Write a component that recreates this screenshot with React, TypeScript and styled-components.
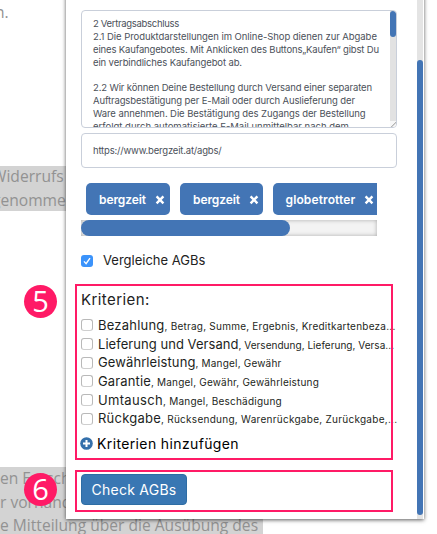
import React from 'react';
import styled, { createGlobalStyle } from 'styled-components';

const BLUE = '#4375b5';
const PINK = '#ff1a66';

const GlobalStyle = createGlobalStyle`
  * { box-sizing: border-box; }
  body { margin: 0; background: #fff; overflow: hidden; font-family: Inter, sans-serif; }
`;

const Page = styled.div`
  position: relative;
  width: 437px;
  height: 534px;
  overflow: hidden;
  background: #fff;
`;

const Article = styled.article`
  display: flex;
  flex-direction: column;
  align-items: flex-start;
  padding-top: 1px;
  font: 15.6px/23.7px 'Open Sans', sans-serif;
  color: #929292;
  white-space: nowrap;
`;

const Paragraph = styled.p<{ $gap?: number; $shift?: number; $selected?: boolean }>`
  margin: ${p => p.$gap ?? 0}px 0 0 ${p => p.$shift ?? 0}px;
  padding-right: 5px;
  background: ${p => (p.$selected ? '#d3d3d3' : 'transparent')};
`;

const Selection = styled(Paragraph)`
  width: 90px;
  height: 45px;
  & > span {
    display: block;
    margin-top: -1px;
    margin-bottom: 1px;
  }
`;

const Panel = styled.section`
  position: absolute;
  left: 66px;
  top: -10px;
  width: 358px;
  height: 529px;
  display: flex;
  background: #fff;
  box-shadow: 0 1px 4px rgba(0, 0, 0, 0.65);
`;

const PanelBody = styled.div`
  width: 351px;
  padding: 20px 0 0 15px;
  display: flex;
  flex-direction: column;
  align-items: flex-start;
`;

const PanelTrack = styled.div`
  flex: 0 0 6px;
  height: 529px;
  padding-top: 70px;
  background: #e4e4e4;
`;

const PanelThumb = styled.div`
  height: 455px;
  border-radius: 3px;
  background: ${BLUE};
`;

const TermsBox = styled.div`
  display: flex;
  justify-content: space-between;
  width: 316px;
  height: 118px;
  border: 1px solid #c9cfda;
  border-radius: 4px;
  overflow: hidden;
`;

const TermsText = styled.div`
  padding: 7px 0 0 11px;
  font-size: 9.5px;
  line-height: 12.86px;
  color: #4b515a;
  white-space: nowrap;
`;

const Line = styled.div<{ $ls: number }>`
  min-height: 12.86px;
  letter-spacing: ${p => p.$ls}px;
`;

const TermsTrack = styled.div`
  width: 6px;
  height: 116px;
  display: flex;
  flex-direction: column;
  justify-content: space-between;
  background: #e2e2e2;
`;

const TermsThumb = styled.div`
  height: 26px;
  border-radius: 3px;
  background: ${BLUE};
`;

const Resizer = styled.div`
  height: 6px;
  background: linear-gradient(135deg, #f7f7f7 55%, #aaa 56%, #f7f7f7 75%);
`;

const UrlField = styled.div`
  width: 316px;
  height: 35px;
  margin-top: 5px;
  padding-left: 11px;
  border: 1px solid #c9cfda;
  border-radius: 4px;
  font-size: 9.5px;
  line-height: 34px;
  letter-spacing: -0.19px;
  color: #4b515a;
`;

const TagStrip = styled.div`
  display: flex;
  gap: 10px;
  width: 296px;
  margin-top: 15px;
  padding-left: 5px;
  overflow: hidden;
`;

const Tag = styled.div<{ $width: number; $ls: number }>`
  flex: 0 0 ${p => p.$width}px;
  height: 32px;
  display: flex;
  align-items: center;
  gap: 9px;
  padding-left: 13px;
  border-radius: 5px;
  background: ${BLUE};
  color: #fff;
  font-size: 12px;
  font-weight: 600;
  letter-spacing: ${p => p.$ls}px;
  svg { display: block; flex: none; margin-top: 2px; }
`;

const StripTrack = styled.div`
  width: 296px;
  height: 16px;
  margin-top: 5px;
  background: #f3f3f3;
  box-shadow: inset 0 0 4px rgba(0, 0, 0, 0.3);
`;

const StripThumb = styled.div`
  width: 209px;
  height: 16px;
  border-radius: 8px;
  background: ${BLUE};
`;

const CompareRow = styled.div`
  display: flex;
  align-items: center;
  gap: 10px;
  height: 20px;
  margin-top: 14px;
  font-size: 13px;
  color: #222;
`;

const Checked = styled.div`
  width: 12px;
  height: 12px;
  margin-top: 1px;
  border-radius: 3px;
  background: #3b93fb;
  svg { display: block; }
`;

const Heading = styled.div`
  height: 22px;
  margin-top: 19px;
  font-size: 15px;
  line-height: 22px;
  letter-spacing: 0.42px;
  color: #222;
`;

const CriteriaList = styled.div`
  display: flex;
  flex-direction: column;
  margin-top: 5px;
`;

const Criterion = styled.div`
  display: flex;
  align-items: center;
  height: 18.7px;
  white-space: nowrap;
  color: #1d1f22;
`;

const Box = styled.div`
  width: 12px;
  height: 12px;
  margin-right: 5px;
  border: 1px solid #b9b9b9;
  border-bottom-color: #cfcfcf;
  border-radius: 3px;
  background: #fff;
`;

const Label = styled.div`
  display: flex;
  align-items: baseline;
  line-height: 18px;
`;

const Name = styled.span<{ $ls: number }>`
  font-size: 13px;
  letter-spacing: ${p => p.$ls}px;
`;

const Terms = styled.span<{ $ls: number }>`
  font-size: 10px;
  letter-spacing: ${p => p.$ls}px;
`;

const AddRow = styled.div`
  display: flex;
  align-items: center;
  gap: 4px;
  height: 22px;
  margin: 4px 0 0 -1px;
  font-size: 14px;
  letter-spacing: 0.37px;
  color: #000;
  svg { display: block; }
`;

const CheckButton = styled.button`
  width: 106px;
  height: 31px;
  margin: 20px 0 0;
  padding: 0;
  border: 1px solid #2e6da4;
  border-radius: 4px;
  background: #3977b3;
  color: #fff;
  font: 14px Inter, sans-serif;
  letter-spacing: 0.25px;
`;

const Frame = styled.div<{ $top: number; $height: number }>`
  position: absolute;
  left: 75px;
  top: ${p => p.$top}px;
  width: 318px;
  height: ${p => p.$height}px;
  border: 2px solid ${PINK};
`;

const Badge = styled.div<{ $top: number }>`
  position: absolute;
  left: 24px;
  top: ${p => p.$top}px;
  width: 33px;
  height: 33px;
  border-radius: 50%;
  background: ${PINK};
  color: #fff;
  font: 29px/31px 'Open Sans', sans-serif;
  text-align: center;
`;

const Cross = () => (
  <svg width="10" height="10" viewBox="0 0 10 10">
    <path d="M1.6 1.3 8.4 8.3M8.4 1.3 1.6 8.3" stroke="#fff" strokeWidth="2.4" />
  </svg>
);

const terms: [string, number][] = [
  ['2 Vertragsabschluss', -0.31],
  ['2.1 Die Produktdarstellungen im Online-Shop dienen zur Abgabe', -0.06],
  ['eines Kaufangebotes. Mit Anklicken des Buttons„Kaufen“ gibst Du', -0.149],
  ['ein verbindliches Kaufangebot ab.', -0.128],
  ['', 0],
  ['2.2 Wir können Deine Bestellung durch Versand einer separaten', -0.134],
  ['Auftragsbestätigung per E-Mail oder durch Auslieferung der', -0.125],
  ['Ware annehmen. Die Bestätigung des Zugangs der Bestellung', -0.088],
  ['erfolgt durch automatisierte E-Mail unmittelbar nach dem', 0],
];

const tags: [string, number, number][] = [
  ['bergzeit', 84, -0.08],
  ['bergzeit', 82.5, -0.08],
  ['globetrotter', 110, 0.13],
];

const criteria: [string, number, string, number][] = [
  ['Bezahlung', 0.217, ', Betrag, Summe, Ergebnis, Kreditkartenbeza...', 0.23],
  ['Lieferung und Versand', 0.045, ', Versendung, Lieferung, Versa...', 0.03],
  ['Gewährleistung', 0.1, ', Mangel, Gewähr', 0.19],
  ['Garantie', 0.143, ', Mangel, Gewähr, Gewährleistung', 0.19],
  ['Umtausch', 0.332, ', Mangel, Beschädigung', 0.23],
  ['Rückgabe', 0.233, ', Rücksendung, Warenrückgabe, Zurückgabe,...', 0.27],
];

export default function App() {
  return (
    <Page>
      <GlobalStyle />
      <Article>
        <Paragraph $shift={-5}>n.</Paragraph>
        <Selection $gap={141.3} $shift={-8} $selected>
          <span>Widerrufs</span>
          <span>genommen</span>
        </Selection>
        <Paragraph $gap={256} $selected>
          en Entsch<br />
          r vorhand<br />
          e Mitteilung über die Ausübung des
        </Paragraph>
      </Article>

      <Panel>
        <PanelBody>
          <TermsBox>
            <TermsText>
              {terms.map(([text, ls], i) => (
                <Line key={i} $ls={ls}>{text}</Line>
              ))}
            </TermsText>
            <TermsTrack>
              <TermsThumb />
              <Resizer />
            </TermsTrack>
          </TermsBox>
          <UrlField>https://www.bergzeit.at/agbs/</UrlField>
          <TagStrip>
            {tags.map(([text, width, ls], i) => (
              <Tag key={i} $width={width} $ls={ls}>
                {text}
                <Cross />
              </Tag>
            ))}
          </TagStrip>
          <StripTrack>
            <StripThumb />
          </StripTrack>
          <CompareRow>
            <Checked>
              <svg width="12" height="12" viewBox="0 0 12 12">
                <path d="M3 6.4 5.1 8.7 9 3.2" fill="none" stroke="#fff" strokeWidth="1.4" />
              </svg>
            </Checked>
            Vergleiche AGBs
          </CompareRow>
          <Heading>Kriterien:</Heading>
          <CriteriaList>
            {criteria.map(([name, nameLs, words, wordsLs]) => (
              <Criterion key={name}>
                <Box />
                <Label>
                  <Name $ls={nameLs}>{name}</Name>
                  <Terms $ls={wordsLs}>{words}</Terms>
                </Label>
              </Criterion>
            ))}
          </CriteriaList>
          <AddRow>
            <svg width="13" height="13" viewBox="0 0 13 13">
              <circle cx="6.5" cy="6.5" r="6.3" fill="#3470ab" />
              <path d="M6.5 3v7M3 6.5h7" stroke="#fff" strokeWidth="2" />
            </svg>
            Kriterien hinzufügen
          </AddRow>
          <CheckButton>Check AGBs</CheckButton>
        </PanelBody>
        <PanelTrack>
          <PanelThumb />
        </PanelTrack>
      </Panel>

      <Frame $top={284} $height={176} />
      <Frame $top={470} $height={42} />
      <Badge $top={285}>5</Badge>
      <Badge $top={473}>6</Badge>
    </Page>
  );
}
